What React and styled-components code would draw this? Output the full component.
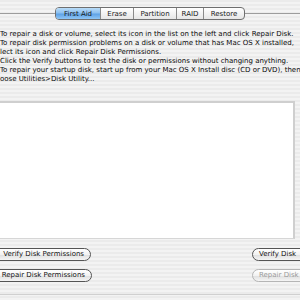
import React from "react";
import styled, { createGlobalStyle } from "styled-components";

// Styles

const Global = createGlobalStyle`
  html, body {
    margin: 0;
    padding: 0;
  }
  body {
    font-family: "DejaVu Sans", "Liberation Sans", sans-serif;
    color: #111;
  }
`;

const Wrapper = styled.div`
  width: 300px;
  height: 300px;
  overflow: hidden;
  display: flex;
  flex-direction: column;
  background: repeating-linear-gradient(
    to bottom,
    #ebebeb 0px,
    #ebebeb 2px,
    #f3f3f3 2px,
    #f3f3f3 4px
  );
`;

const TabBar = styled.div`
  display: flex;
  align-items: center;
  height: 13px;
  margin-top: 7px;
`;

const Rule = styled.div`
  flex: 1;
  height: 1px;
  background: #9c9c9c;
`;

const Tabs = styled.div`
  display: flex;
  height: 11px;
  border: 1px solid #6f6f6f;
  border-radius: 4px;
  overflow: hidden;
  background: linear-gradient(#ffffff, #e6e6e6);
`;

const Tab = styled.div`
  width: ${(p) => p.w}px;
  display: flex;
  align-items: center;
  justify-content: center;
  font-size: 7px;
  color: #1a1a1a;
  border-left: ${(p) => (p.first ? "none" : "1px solid #8a8a8a")};
  background: ${(p) =>
    p.active
      ? "linear-gradient(#b9dcf8 0%, #8cc0f0 45%, #5ea2e6 55%, #8fc6f6 100%)"
      : "transparent"};
`;

const Info = styled.div`
  margin-top: 10px;
  font-size: 7px;
  line-height: 9px;
  white-space: nowrap;
  color: #0a0a0a;
`;

const ListBox = styled.div`
  margin-top: 17px;
  margin-left: -4px;
  width: 297px;
  height: 135px;
  background: #fff;
  border-top: 2px solid #cfcfcf;
  border-right: 2px solid #cfcfcf;
  border-bottom: 1px solid #d6d6d6;
`;

const ButtonRow = styled.div`
  display: flex;
  justify-content: space-between;
  margin-top: ${(p) => p.gap}px;
`;

const Button = styled.button`
  height: 13px;
  padding: 0 6px;
  margin: ${(p) => (p.left ? "0 0 0 -14px" : "0 -22px 0 0")};
  width: ${(p) => p.w}px;
  border: 1px solid ${(p) => (p.disabled ? "#b5b5b5" : "#555")};
  border-radius: 7px;
  background: linear-gradient(#ffffff, #f2f2f2 50%, #dedede 51%, #f5f5f5);
  font-family: "DejaVu Sans", "Liberation Sans", sans-serif;
  font-size: 7px;
  color: ${(p) => (p.disabled ? "#9a9a9a" : "#111")};
  text-align: ${(p) => (p.left ? "right" : "left")};
  white-space: nowrap;
  line-height: 11px;
`;

const Footer = styled.div`
  margin-top: auto;
  height: 5px;
  border-top: 1px solid #d0d0d0;
`;

const tabs = [
  { label: "First Aid", w: 44 },
  { label: "Erase", w: 32 },
  { label: "Partition", w: 42 },
  { label: "RAID", w: 26 },
  { label: "Restore", w: 40 },
];

const lines = [
  "To repair a disk or volume, select its icon in the list on the left and click Repair Disk.",
  "To repair disk permission problems on a disk or volume that has Mac OS X installed,",
  "lect its icon and click Repair Disk Permissions.",
  "Click the Verify buttons to test the disk or permissions without changing anything.",
  "To repair your startup disk, start up from your Mac OS X Install disc (CD or DVD), then",
  "oose Utilities>Disk Utility...",
];

class App extends React.Component {
  render() {
    return (
      <Wrapper>
        <Global />
        <TabBar>
          <Rule />
          <Tabs>
            {tabs.map((t, i) => (
              <Tab key={t.label} w={t.w} first={i === 0} active={i === 0}>
                {t.label}
              </Tab>
            ))}
          </Tabs>
          <Rule />
        </TabBar>
        <Info>
          {lines.map((l) => (
            <div key={l}>{l}</div>
          ))}
        </Info>
        <ListBox />
        <ButtonRow gap={9}>
          <Button left w={105}>Verify Disk Permissions</Button>
          <Button w={70}>Verify Disk</Button>
        </ButtonRow>
        <ButtonRow gap={8}>
          <Button left w={106}>Repair Disk Permissions</Button>
          <Button w={70} disabled>
            Repair Disk
          </Button>
        </ButtonRow>
        <Footer />
      </Wrapper>
    );
  }
}

export default App;
